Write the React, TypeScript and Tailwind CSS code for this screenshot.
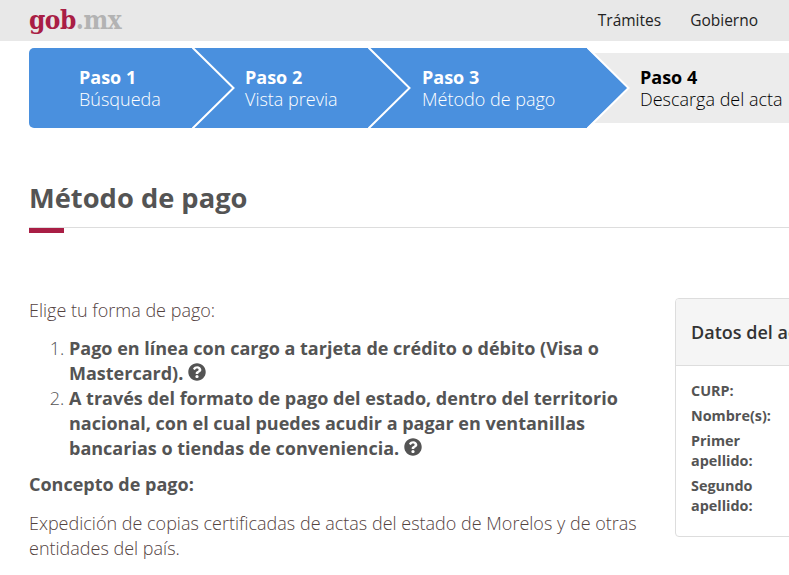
import React from "react";
import { FaQuestionCircle } from "react-icons/fa";

const Chevron = () => (
  <svg className="absolute left-full top-0 z-10" width="44" height="80" viewBox="0 0 44 80">
    <path d="M0 0 L41.5 40 L0 80 Z" fill="#4a90de" />
    <path d="M0 -1 L41.5 40 L0 81" fill="none" stroke="#ffffff" strokeWidth="2" />
  </svg>
);

const Step = ({ n, label, className }: { n: number; label: string; className: string }) => (
  <div className={`relative h-20 shrink-0 bg-[#4a90de] text-white flex flex-col justify-center ${className}`}>
    <div className="text-[18px] leading-[22px] font-bold">Paso {n}</div>
    <div className="text-[18px] leading-[22px] font-light whitespace-nowrap">{label}</div>
    <Chevron />
  </div>
);

const Help = () => <FaQuestionCircle className="inline-block align-[-1px] text-[18px] text-[#545454]" />;

const Label = ({ children }: { children: React.ReactNode }) => (
  <div className="font-bold text-[14.4px] leading-5 mb-[5px] w-[90px]">{children}</div>
);

export default function App() {
  return (
    <div className="w-[789px] h-[575px] overflow-hidden bg-white text-[#545454] font-['Open_Sans','Liberation_Sans',sans-serif]">
      <header className="h-[41px] bg-[#e8e8e8] flex items-center justify-between pl-[29px] pr-[31px]">
        <div className="font-['DejaVu_Serif','Liberation_Serif',serif] [font-stretch:condensed] font-bold text-[26px] leading-[37px] tracking-[-0.5px]">
          <span className="text-[#a91e45]">gob</span>
          <span className="text-[#b3b3b3]">.mx</span>
        </div>
        <nav className="flex gap-[29px] text-[15.5px] text-[#222222]">
          <span>Trámites</span>
          <span>Gobierno</span>
        </nav>
      </header>

      <div className="flex mt-[7px] ml-[29px] items-center">
        <Step n={1} label="Búsqueda" className="w-[163px] pl-[50px] rounded-l-[5px]" />
        <Step n={2} label="Vista previa" className="w-[176px] pl-[53px]" />
        <Step n={3} label="Método de pago" className="w-[219px] pl-[54px]" />
        <div className="h-[70px] grow shrink-0 bg-[#ececec] text-black pl-[53px] flex flex-col justify-center">
          <div className="text-[18px] leading-[22px] font-bold">Paso 4</div>
          <div className="text-[18px] leading-[22px] whitespace-nowrap font-light">Descarga del acta</div>
        </div>
      </div>

      <div className="mt-[50px] pl-[29px]">
        <h1 className="text-[27.3px] leading-[40px] font-bold">Método de pago</h1>
        <div className="mt-[9px] border-t border-[#dddddd] h-[5px]">
          <div className="w-[35px] h-[5px] bg-[#a91e45]" />
        </div>
      </div>

      <div className="flex gap-[30px] pl-[29px] mt-[66px]">
        <div className="w-[616px] shrink-0 text-[18px] leading-[25px]">
          <p className="font-light text-[#54433f]">Elige tu forma de pago:</p>
          <ol className="list-decimal pl-[40px] mt-[13px] font-bold">
            <li className="marker:font-light">
              Pago en línea con cargo a tarjeta de crédito o débito (Visa o Mastercard). <Help />
            </li>
            <li className="marker:font-light">
              A través del formato de pago del estado, dentro del territorio nacional, con el cual puedes acudir a pagar en ventanillas bancarias o tiendas de conveniencia. <Help />
            </li>
          </ol>
          <p className="font-bold mt-[11px]">Concepto de pago:</p>
          <p className="font-light mt-[14px] text-[#54433f]">
            Expedición de copias certificadas de actas del estado de Morelos y de otras entidades del país.
          </p>
        </div>
        <aside className="w-[360px] shrink-0 h-[239px] border border-[#dddddd] rounded-[4px] overflow-hidden">
          <div className="h-[67px] bg-[#f5f5f5] border-b border-[#dddddd] flex items-center pl-[15px] text-[18px] font-semibold text-[#333333] whitespace-nowrap">
            Datos del acta
          </div>
          <div className="pl-[15px] pt-[15px]">
            <Label>CURP:</Label>
            <Label>Nombre(s):</Label>
            <Label>Primer apellido:</Label>
            <Label>Segundo apellido:</Label>
          </div>
        </aside>
      </div>
    </div>
  );
}
